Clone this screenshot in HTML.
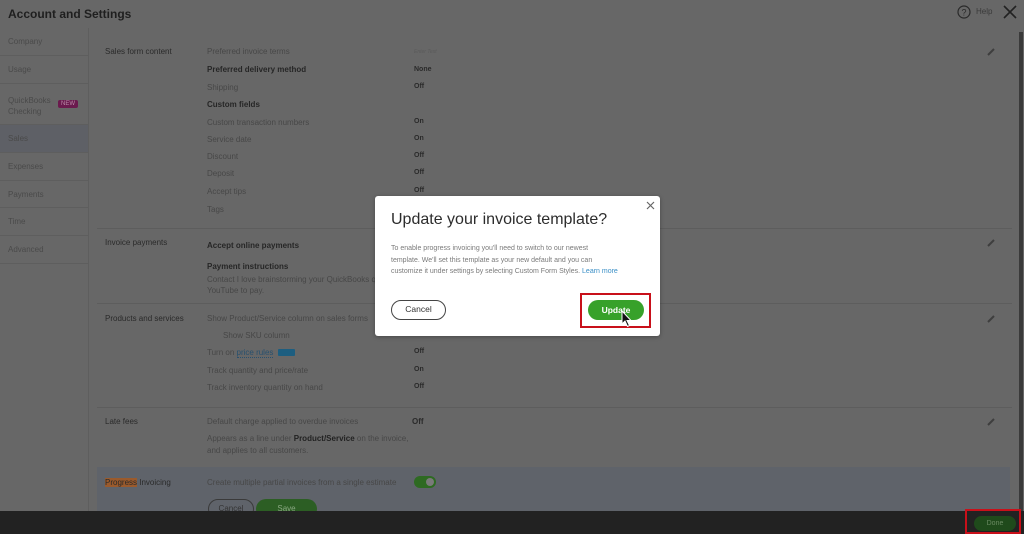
<!DOCTYPE html>
<html style="background:#676767"><head><meta charset="utf-8"><style>
*{margin:0;padding:0;box-sizing:border-box}
html{background:#676767}
body{width:1024px;height:534px;overflow:hidden;background:#676767;font-family:"Liberation Sans",sans-serif;position:relative;color:#2b2b2b}
.a{position:absolute;white-space:nowrap}
.s{font-size:8px;color:#474747}
.b{font-size:8px;font-weight:bold;color:#262626}
.v{font-size:7px;font-weight:bold;color:#2a2a2a}
.nav{position:absolute;left:0;width:88px;border-bottom:1px solid #5e5e5e;font-size:8px;color:#4a4a4a;padding-left:8px}
.hr{position:absolute;left:97px;width:915px;height:1px;background:#5d5d5d}
.pen{position:absolute;width:10px;height:10px}
</style></head><body>
<div class="a" style="left:0;top:0;width:1024px;height:534px;background:#676767"></div>
<div class="a" style="left:8px;top:7px;font-size:12px;font-weight:bold;color:#1f1f1f">Account and Settings</div>
<svg class="a" style="left:957px;top:5px" width="14" height="14" viewBox="0 0 14 14"><circle cx="7" cy="7" r="6" fill="none" stroke="#2a2a2a" stroke-width="1.2"/><text x="7" y="10.5" font-size="9" text-anchor="middle" fill="#2a2a2a" font-family="Liberation Sans">?</text></svg>
<div class="a" style="left:976px;top:7px;font-size:8px;color:#3a3a3a">Help</div>
<svg class="a" style="left:1003px;top:5px" width="14" height="14"><path d="M1 1L13 13M13 1L1 13" stroke="#222" stroke-width="1.6"/></svg>
<div class="a" style="left:1019px;top:32px;width:4px;height:479px;background:#3a3a3a"></div>
<div class="a" style="left:88px;top:28px;width:1px;height:483px;background:#5e5e5e"></div>
<div class="nav" style="top:28px;height:28px;line-height:28px">Company</div>
<div class="nav" style="top:56px;height:28px;line-height:28px">Usage</div>
<div class="nav" style="top:84px;height:41px;padding-top:11px;line-height:11px">QuickBooks<br>Checking</div>
<div class="a" style="left:58px;top:100px;background:#6b1a4e;color:#b98aa8;font-size:6px;padding:1px 3px;border-radius:2px">NEW</div>
<div class="nav" style="top:125px;height:28px;line-height:28px;background:#5e6066">Sales</div>
<div class="nav" style="top:153px;height:28px;line-height:28px">Expenses</div>
<div class="nav" style="top:181px;height:27px;line-height:27px">Payments</div>
<div class="nav" style="top:208px;height:28px;line-height:28px">Time</div>
<div class="nav" style="top:236px;height:28px;line-height:28px">Advanced</div>

<div class="a s" style="left:105px;top:47px;color:#2a2a2a">Sales form content</div>
<div class="a s" style="left:207px;top:47px">Preferred invoice terms</div>
<div class="a" style="left:414px;top:49px;font-size:5px;color:#5a5a5a;font-style:italic">Enter Text</div>
<div class="a b" style="left:207px;top:65px">Preferred delivery method</div><div class="a v" style="left:414px;top:66px">None</div>
<div class="a s" style="left:207px;top:83px">Shipping</div><div class="a v" style="left:414px;top:83px">Off</div>
<div class="a b" style="left:207px;top:100px">Custom fields</div>
<div class="a s" style="left:207px;top:118px">Custom transaction numbers</div><div class="a v" style="left:414px;top:118px">On</div>
<div class="a s" style="left:207px;top:135px">Service date</div><div class="a v" style="left:414px;top:135px">On</div>
<div class="a s" style="left:207px;top:152px">Discount</div><div class="a v" style="left:414px;top:152px">Off</div>
<div class="a s" style="left:207px;top:169px">Deposit</div><div class="a v" style="left:414px;top:169px">Off</div>
<div class="a s" style="left:207px;top:187px">Accept tips</div><div class="a v" style="left:414px;top:187px">Off</div>
<div class="a s" style="left:207px;top:205px">Tags</div>
<div class="hr" style="top:228px"></div>
<div class="a s" style="left:105px;top:238px;color:#2a2a2a">Invoice payments</div>
<div class="a b" style="left:207px;top:241px">Accept online payments</div>
<div class="a b" style="left:207px;top:262px">Payment instructions</div>
<div class="a s" style="left:207px;top:275px">Contact I love brainstorming your QuickBooks q</div>
<div class="a s" style="left:207px;top:286px">YouTube to pay.</div>
<div class="hr" style="top:303px"></div>
<div class="a s" style="left:105px;top:314px;color:#2a2a2a">Products and services</div>
<div class="a s" style="left:207px;top:314px">Show Product/Service column on sales forms</div>
<div class="a s" style="left:223px;top:331px">Show SKU column</div>
<div class="a s" style="left:207px;top:348px">Turn on <span style="color:#28506e;border-bottom:1px dotted #28506e">price rules</span></div>
<div class="a" style="left:278px;top:349px;background:#1d5e80;width:17px;height:7px;border-radius:1px"></div>
<div class="a v" style="left:414px;top:348px">Off</div>
<div class="a s" style="left:207px;top:366px">Track quantity and price/rate</div><div class="a v" style="left:414px;top:366px">On</div>
<div class="a s" style="left:207px;top:383px">Track inventory quantity on hand</div><div class="a v" style="left:414px;top:383px">Off</div>
<div class="hr" style="top:407px"></div>
<div class="a s" style="left:105px;top:417px;color:#2a2a2a">Late fees</div>
<div class="a s" style="left:207px;top:417px">Default charge applied to overdue invoices</div><div class="a v" style="left:412px;top:417px;font-size:8px">Off</div>
<div class="a s" style="left:207px;top:434px">Appears as a line under <b style="color:#222">Product/Service</b> on the invoice,</div>
<div class="a s" style="left:207px;top:446px">and applies to all customers.</div>
<div class="a" style="left:97px;top:467px;width:913px;height:44px;background:#5f636a"></div>
<div class="a s" style="left:105px;top:478px;color:#2a2a2a"><span style="background:#9a5a2c">Progress</span> Invoicing</div>
<div class="a s" style="left:207px;top:478px">Create multiple partial invoices from a single estimate</div>
<div class="a" style="left:414px;top:476px;width:22px;height:12px;border-radius:6px;background:#2e6a22"><div style="position:absolute;right:2px;top:2px;width:8px;height:8px;border-radius:50%;background:#7a7a7a"></div></div>
<div class="a" style="left:208px;top:499px;width:46px;height:20px;border:1px solid #3a3a3a;border-radius:10px;font-size:8px;color:#333;text-align:center;line-height:18px">Cancel</div>
<div class="a" style="left:256px;top:499px;width:61px;height:20px;background:#2c5e24;border-radius:10px;font-size:8px;color:#8aa882;text-align:center;line-height:20px">Save</div>
<svg class="pen" style="left:986px;top:47px" viewBox="0 0 10 10"><path d="M2 8L8 2" stroke="#3e3e3e" stroke-width="2"/></svg>
<svg class="pen" style="left:986px;top:238px" viewBox="0 0 10 10"><path d="M2 8L8 2" stroke="#3e3e3e" stroke-width="2"/></svg>
<svg class="pen" style="left:986px;top:314px" viewBox="0 0 10 10"><path d="M2 8L8 2" stroke="#3e3e3e" stroke-width="2"/></svg>
<svg class="pen" style="left:986px;top:417px" viewBox="0 0 10 10"><path d="M2 8L8 2" stroke="#3e3e3e" stroke-width="2"/></svg>

<div class="a" style="left:0;top:511px;width:1024px;height:23px;background:#222"></div>
<div class="a" style="left:965px;top:509px;width:56px;height:25px;border:2px solid #c8101a"></div>
<div class="a" style="left:974px;top:516px;width:42px;height:15px;border-radius:8px;background:#1f4a1b;color:#6a8a62;font-size:7px;text-align:center;line-height:15px">Done</div>

<div class="a" style="left:375px;top:196px;width:285px;height:140px;background:#fff;border-radius:3px;box-shadow:0 1px 4px rgba(0,0,0,.3)"></div>
<svg class="a" style="left:646px;top:201px" width="9" height="9"><path d="M1 1L8 8M8 1L1 8" stroke="#666" stroke-width="1.2"/></svg>
<div class="a" style="left:391px;top:211px;font-size:16px;color:#2c2c2c">Update your invoice template?</div>
<div class="a" style="left:391px;top:243px;font-size:7px;color:#7a7a7a;line-height:11.5px">To enable progress invoicing you'll need to switch to our newest<br>template. We'll set this template as your new default and you can<br>customize it under settings by selecting Custom Form Styles. <span style="color:#3a8fc6">Learn more</span></div>
<div class="a" style="left:391px;top:300px;width:55px;height:20px;border:1.5px solid #444;border-radius:10px;font-size:8.5px;color:#333;text-align:center;line-height:17px">Cancel</div>
<div class="a" style="left:580px;top:293px;width:71px;height:35px;border:2.5px solid #c8101a"></div>
<div class="a" style="left:588px;top:300px;width:56px;height:20px;background:#37a12a;border-radius:10px;font-size:8.5px;color:#fff;text-align:center;line-height:20px;font-weight:bold">Update</div>
<svg class="a" style="left:621px;top:310px" width="12" height="18" viewBox="0 0 12 18"><path d="M1 1L1 14L4 11L6.5 16.5L8.5 15.5L6 10.5L10 10.5Z" fill="#111" stroke="#fff" stroke-width="1"/></svg>
</body></html>
